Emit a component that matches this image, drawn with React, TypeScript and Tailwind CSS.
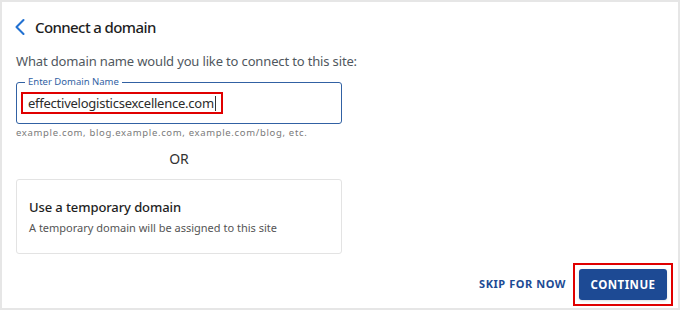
import { ChevronLeft } from 'lucide-react';

export default function App() {
  return (
    <div
      className="w-[680px] h-[310px] bg-white border-2 border-[#e6e6e6] flex flex-col px-[14px] pt-[11px]"
      style={{ fontFamily: '"Noto Sans", "Open Sans", sans-serif' }}
    >
      {/* Header */}
      <div className="flex items-center gap-[1px]">
        <ChevronLeft className="w-[28px] h-[28px] text-[#2271d1] -ml-[10px]" strokeWidth={1.8} />
        <h1 className="text-[15px] font-medium tracking-[-0.6px] text-[#1e1e1e] leading-none">Connect a domain</h1>
      </div>

      <p className="mt-[11px] text-[13px] tracking-[-0.15px] text-[#50575e] leading-[18px]">
        What domain name would you like to connect to this site:
      </p>

      {/* Domain input */}
      <div className="relative mt-[12px] w-[326px] h-[42px] border-[1.5px] border-[#3161a3] rounded-[3px] flex items-center pl-[4px]">
        <span className="absolute -top-[8px] left-[8px] bg-white px-[3px] text-[9.5px] text-[#3161a3] leading-[14px]">
          Enter Domain Name
        </span>
        <div className="h-[22px] w-[202px] border-2 border-[#e00000] flex items-center pl-[5px]">
          <span className="text-[13px] tracking-[-0.25px] text-[#2c2c2c] leading-none">effectivelogisticsexcellence.com</span>
          <span className="w-px h-[15px] bg-[#333] ml-[1px]" />
        </div>
      </div>
      <p className="mt-[3px] text-[9.5px] tracking-[0.07em] text-[#7a7a7a] leading-[12px]">
        example.com, blog.example.com, example.com/blog, etc.
      </p>

      <div className="w-[326px] text-center mt-[11px] text-[14px] text-[#333] leading-[18px]">OR</div>

      {/* Temporary domain card */}
      <div className="mt-[11px] w-[326px] h-[75px] border border-[#e3e3e3] rounded-[3px] px-[12px] flex flex-col justify-center">
        <h2 className="text-[13px] font-medium tracking-[-0.1px] text-[#1e1e1e] leading-[18px]">Use a temporary domain</h2>
        <p className="mt-[4px] text-[11px] text-[#555] leading-[15px]">
          A temporary domain will be assigned to this site
        </p>
      </div>

      {/* Footer actions */}
      <div className="mt-auto mb-[2px] flex items-center justify-end gap-[7px] -mr-[9px]">
        <button className="text-[11px] font-bold tracking-[0.05em] text-[#1d4b94]">SKIP FOR NOW</button>
        <div className="border-2 border-[#e00000] p-[4px]">
          <button className="h-[31px] w-[88px] bg-[#1d4a94] rounded-[3px] text-white text-[11.5px] font-bold tracking-[0.04em] shadow-sm">
            CONTINUE
          </button>
        </div>
      </div>
    </div>
  );
}
